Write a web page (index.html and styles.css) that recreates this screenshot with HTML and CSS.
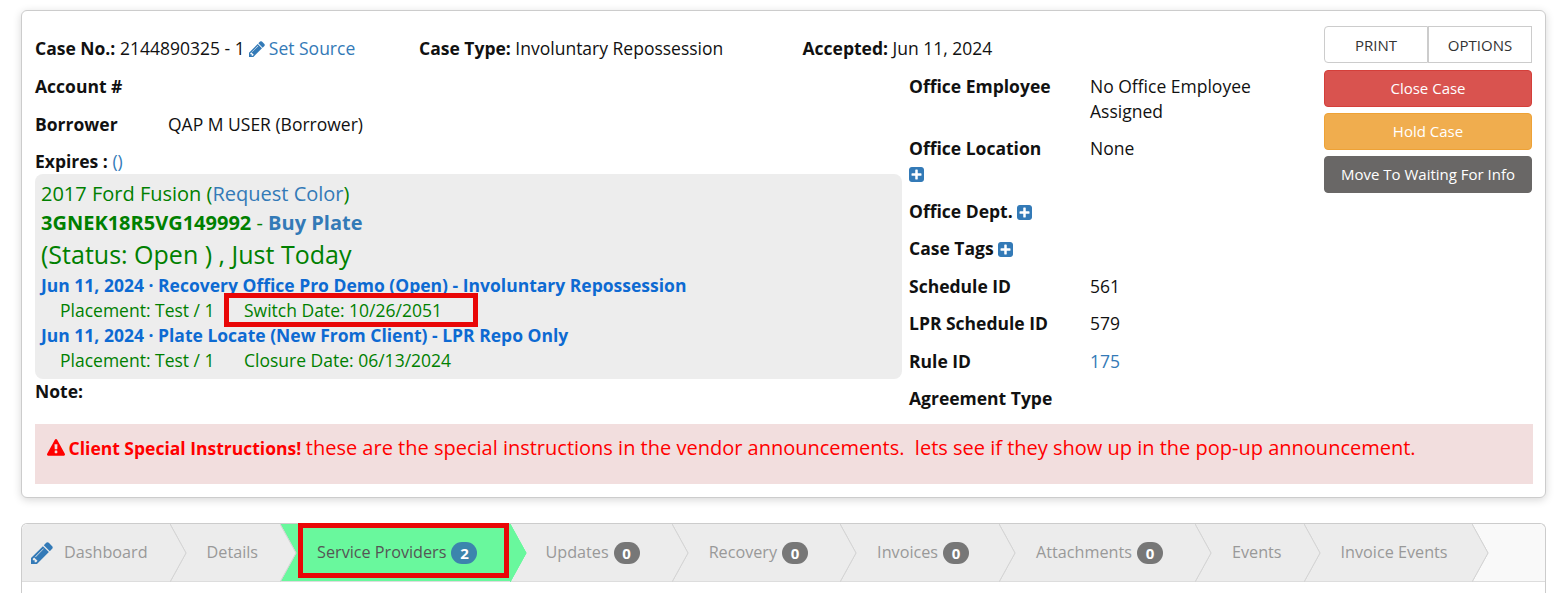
FILE: index.html
```html
<!DOCTYPE html>
<html lang="en">
<head>
<meta charset="utf-8">
<title>Case 2144890325</title>
<link rel="stylesheet" href="styles.css">
</head>
<body>
<svg class="defs" width="0" height="0" aria-hidden="true">
  <symbol id="i-pencil" viewBox="128 128 1536 1536"><path d="M491 1536l91-91-235-235-91 91v107h128v128h107zm523-928q0-22-22-22-10 0-17 7l-542 542q-7 7-7 17 0 22 22 22 10 0 17-7l542-542q7-7 7-17zm-54-192l416 416-832 832h-416v-416zm683 96q0 53-37 90l-166 166-416-416 166-165q36-38 90-38 53 0 91 38l235 234q37 39 37 91z"/></symbol>
  <symbol id="i-plus" viewBox="128 128 1536 1536"><path d="M1408 960v-128q0-26-19-45t-45-19h-320v-320q0-26-19-45t-45-19h-128q-26 0-45 19t-19 45v320h-320q-26 0-45 19t-19 45v128q0 26 19 45t45 19h320v320q0 26 19 45t45 19h128q26 0 45-19t19-45v-320h320q26 0 45-19t19-45zm256-544v960q0 119-84.5 203.5t-203.5 84.5h-960q-119 0-203.5-84.5t-84.5-203.5v-960q0-119 84.5-203.5t203.5-84.5h960q119 0 203.5 84.5t84.5 203.5z"/></symbol>
  <symbol id="i-warn" viewBox="0 0 1792 1792"><path d="M1024 1375v-190q0-14-9.5-23.5t-22.5-9.5h-192q-13 0-22.5 9.5t-9.5 23.5v190q0 14 9.5 23.5t22.5 9.5h192q13 0 22.5-9.5t9.5-23.5zm-2-374l18-459q0-12-10-19-13-11-24-11h-220q-11 0-24 11-10 7-10 21l17 457q0 10 10 16.5t24 6.5h185q14 0 23.5-6.5t10.5-16.5zm-14-934l768 1408q35 63-2 126-17 29-46.5 46t-63.5 17h-1536q-34 0-63.5-17t-46.5-46q-37-63-2-126l768-1408q17-31 47-49t65-18 65 18 47 49z"/></symbol>
  <symbol id="i-chev" viewBox="0 0 17 58" preserveAspectRatio="none"><polygon points="0,0 16,29 0,58"/><polyline points="0,0 16,29 0,58"/></symbol>
</svg>

<section class="card">
  <div class="case-grid">
    <div class="case-main">
      <div class="summary">
        <div><b>Case No.:</b> 2144890325 - 1 <a href="#"><svg class="ico pencil"><use href="#i-pencil"/></svg> Set Source</a></div>
        <div><b>Case Type:</b> Involuntary Repossession</div>
        <div><b>Accepted:</b> Jun 11, 2024</div>
      </div>
      <div class="columns">
        <div class="col-left">
          <div class="row"><b>Account #</b></div>
          <div class="row borrower"><b class="borrower-label">Borrower</b><span>QAP M USER (Borrower)</span></div>
          <div class="row expires"><b>Expires :</b> <a href="#">()</a></div>
          <div class="vehicle">
            <div class="v-name">2017 Ford Fusion (<a href="#">Request Color</a>)</div>
            <div class="v-vin"><b>3GNEK18R5VG149992</b> - <a href="#"><b>Buy Plate</b></a></div>
            <div class="v-status">(Status: Open ) , Just Today</div>
            <div class="v-assign"><a href="#">Jun 11, 2024 · Recovery Office Pro Demo (Open) - Involuntary Repossession</a></div>
            <div class="v-meta"><span class="v-place">Placement: Test / 1</span><span class="flagged">Switch Date: 10/26/2051<i class="hl hl-date"></i></span></div>
            <div class="v-assign"><a href="#">Jun 11, 2024 · Plate Locate (New From Client) - LPR Repo Only</a></div>
            <div class="v-meta"><span class="v-place">Placement: Test / 1</span><span>Closure Date: 06/13/2024</span></div>
          </div>
          <div class="note"><b>Note:</b></div>
        </div>
        <dl class="col-right">
          <dt>Office Employee</dt><dd>No Office Employee Assigned</dd>
          <dt>Office Location <a href="#"><svg class="ico plus"><use href="#i-plus"/></svg></a></dt><dd>None</dd>
          <dt class="wide">Office Dept. <a href="#"><svg class="ico plus"><use href="#i-plus"/></svg></a></dt>
          <dt class="wide">Case Tags <a href="#"><svg class="ico plus"><use href="#i-plus"/></svg></a></dt>
          <dt>Schedule ID</dt><dd>561</dd>
          <dt>LPR Schedule ID</dt><dd>579</dd>
          <dt>Rule ID</dt><dd><a href="#">175</a></dd>
          <dt class="wide">Agreement Type</dt>
        </dl>
      </div>
    </div>
    <div class="actions">
      <div class="btn-pair"><button class="btn btn-plain">PRINT</button><button class="btn btn-plain">OPTIONS</button></div>
      <button class="btn btn-red">Close Case</button>
      <button class="btn btn-orange">Hold Case</button>
      <button class="btn btn-dark">Move To Waiting For Info</button>
    </div>
  </div>
  <div class="alert"><svg class="ico warn"><use href="#i-warn"/></svg> <b>Client Special Instructions!</b> <span class="alert-text">these are the special instructions in the vendor announcements.&nbsp; lets see if they show up in the pop-up announcement.</span></div>
</section>

<section class="tabs-panel">
  <nav class="tabs">
    <a class="tab tab-first" href="#"><svg class="ico tab-pencil"><use href="#i-pencil"/></svg>Dashboard<svg class="chev"><use href="#i-chev"/></svg></a>
    <a class="tab" href="#">Details<svg class="chev"><use href="#i-chev"/></svg></a>
    <a class="tab active" href="#">Service Providers<span class="badge badge-blue">2</span><i class="hl hl-tab"></i><svg class="chev"><use href="#i-chev"/></svg></a>
    <a class="tab" href="#">Updates<span class="badge">0</span><svg class="chev"><use href="#i-chev"/></svg></a>
    <a class="tab" href="#">Recovery<span class="badge">0</span><svg class="chev"><use href="#i-chev"/></svg></a>
    <a class="tab" href="#">Invoices<span class="badge">0</span><svg class="chev"><use href="#i-chev"/></svg></a>
    <a class="tab" href="#">Attachments<span class="badge">0</span><svg class="chev"><use href="#i-chev"/></svg></a>
    <a class="tab" href="#">Events<svg class="chev"><use href="#i-chev"/></svg></a>
    <a class="tab" href="#">Invoice Events<svg class="chev"><use href="#i-chev"/></svg></a>
  </nav>
</section>
</body>
</html>
```
FILE: styles.css
```css
* { box-sizing: border-box; }
html, body { height: 100%; }
body {
  margin: 0;
  padding: 10px 17px 0 21px;
  height: 593px;
  overflow: hidden;
  background: #fff;
  color: #111;
  font: 17.5px/25px "Open Sans", sans-serif;
}
a { color: #337ab7; text-decoration: none; }
b { font-weight: 700; }
.defs { position: absolute; }
.ico { display: inline-block; fill: currentColor; vertical-align: -2px; }

.card {
  height: 488px;
  padding: 15px 13px 0;
  background: #fff;
  border: 1px solid #ccc;
  border-radius: 6px;
  box-shadow: 0 2px 8px rgba(0, 0, 0, .16);
}
.case-grid { display: flex; height: 398px; }
.case-main { width: 1289px; }
.summary {
  display: grid;
  grid-template-columns: 384px 383.5px 1fr;
  padding-top: 10px;
  height: 48px;
  align-items: start;
}
.pencil { width: 16px; height: 16px; margin-right: -1px; }
.columns { display: flex; }
.col-left { width: 867px; margin-right: 7px; }
.row { margin-bottom: 12.5px; }
.borrower { display: flex; }
.borrower-label { width: 133px; }
.expires { margin-bottom: 0; }
.vehicle {
  padding: 7px 6px 6px;
  background: #ededed;
  border-radius: 8px;
  color: #008000;
}
.v-name { font-size: 20px; line-height: 26px; }
.v-vin { font-size: 20px; line-height: 31px; }
.v-status { font-size: 25px; line-height: 32px; }
.v-assign { font-size: 17.5px; line-height: 25px; font-weight: 700; margin-top: 3px; }
.v-assign a { color: #0d6ad2; }
.v-assign + .v-meta + .v-assign { margin-top: 0; }
.v-meta { padding-left: 19px; line-height: 25px; display: flex; }
.v-place { width: 184px; }
.flagged { position: relative; }
.hl { position: absolute; border: 5px solid #e90707; pointer-events: none; }
.hl-date { left: -20px; right: -36px; top: -5px; bottom: -4px; }
.note { margin-top: 0; line-height: 25px; }

.col-right {
  margin: -.25px 0 0;
  display: grid;
  grid-template-columns: 181px 1fr;
  row-gap: 12.5px;
  align-content: start;
  flex: 1;
}
.col-right dt { font-weight: 700; padding-right: 34px; }
.col-right .wide { padding-right: 0; }
.col-right dd { margin: 0; max-width: 190px; }
.col-right .wide { grid-column: 1 / -1; }
.plus { width: 15px; height: 15px; }

.actions { width: 208px; display: flex; flex-direction: column; gap: 6px; }
.btn {
  height: 37px;
  padding: 0 0 2px;
  width: 100%;
  border: 1px solid transparent;
  border-radius: 4px;
  color: #fff;
  font: 15px/20px "Open Sans", sans-serif;
}
.btn-pair { display: flex; margin-bottom: 1px; }
.btn-plain { background: #fff; border-color: #ccc; color: #333; padding: 0; }
.btn-plain:first-child { border-radius: 4px 0 0 4px; }
.btn-plain:last-child { border-radius: 0; }
.btn-red { background: #d9534f; border-color: #d43f3a; }
.btn-orange { background: #f0ad4e; border-color: #eea236; }
.btn-dark { background: #696766; border-color: #696766; }

.alert {
  height: 60px;
  padding: 11px 12px;
  background: #f2dede;
  color: #f00;
  font-size: 17.5px;
  width: 1498px;
}
.alert-text { font-size: 20px; }
.warn { width: 18px; height: 18px; margin-right: -1px; }

.tabs-panel {
  margin-top: 25px;
  height: 90px;
  background: #fff;
  border: 1px solid #ccc;
  border-bottom: 0;
  border-radius: 6px 6px 0 0;
  font-size: 16.2px;
}
.tabs {
  display: flex;
  height: 58px;
  background: #f9f9f9;
  border-bottom: 1px solid #ddd;
  border-radius: 6px 6px 0 0;
}
.tab {
  position: relative;
  display: flex;
  align-items: center;
  height: 57px;
  padding: 0 24px 0 37px;
  background: #ececec;
  color: #999;
  white-space: nowrap;
}
.tab:nth-child(1), .tab:nth-child(2), .tab:nth-child(8) { padding-right: 22px; }
.tab:nth-child(3) { padding-right: 26px; }
.tab:nth-child(4) { padding-left: 35px; }
.tab:nth-child(4), .tab:nth-child(5), .tab:nth-child(7) { padding-right: 25px; }
.tab:nth-child(6) { padding-right: 23px; }
.tab-first { padding-left: 9px; border-radius: 6px 0 0 0; }
.tab-pencil { width: 22px; height: 22px; margin-right: 11px; color: #337ab7; }
.tab.active { background: #69f89d; color: #555; }
.chev {
  position: absolute;
  left: 100%;
  top: 0;
  z-index: 1;
  width: 17px;
  height: 58px;
  fill: #ececec;
  stroke: #d4d4d4;
  overflow: visible;
}
.active .chev { fill: #69f89d; stroke: #69f89d; }
.badge {
  width: 26px;
  height: 22px;
  margin-left: 5px;
  margin-right: 7px;
  border-radius: 11px;
  background: #777;
  color: #fff;
  font-size: 15px;
  font-weight: 700;
  line-height: 22px;
  text-align: center;
}
.badge-blue { background: #3c85ad; }
.hl-tab { left: 18px; right: 1px; top: -1px; bottom: 3px; z-index: 2; }
```
